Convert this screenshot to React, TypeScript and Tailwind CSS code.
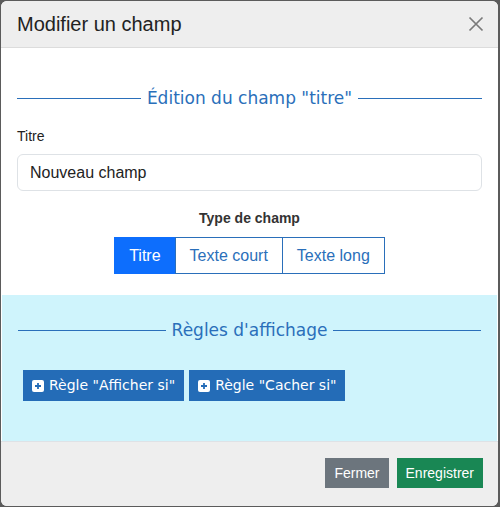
import React from "react";

// ── Small pieces ──────────────────────────────────────────────────────────────

function Legend({ label }: { label: string }) {
  return (
    <div className="flex items-center gap-[6px]">
      <div className="h-[1px] flex-1 bg-[#2a6fba]" />
      <span
        className="text-[17px] leading-6 text-[#2a6fba]"
        style={{ fontFamily: '"DejaVu Sans", Verdana, sans-serif' }}
      >
        {label}
      </span>
      <div className="h-[1px] flex-1 bg-[#2a6fba]" />
    </div>
  );
}

function PlusSquare() {
  return (
    <svg width="12" height="12" viewBox="0 0 12 12" aria-hidden="true">
      <rect x="0" y="0" width="12" height="12" rx="2" fill="#ffffff" />
      <path d="M6 3v6M3 6h6" stroke="#246cb7" strokeWidth="1.8" />
    </svg>
  );
}

const TYPES = ["Titre", "Texte court", "Texte long"];

// ── Modal ─────────────────────────────────────────────────────────────────────

export default function App() {
  return (
    <div
      className="w-[500px] h-[507px] bg-[#5b5b5b] pl-[1px] pr-[2px] pt-[1px] pb-[1px]"
      style={{ fontFamily: '"Liberation Sans", Arial, sans-serif' }}
    >
      <div className="flex h-full flex-col overflow-hidden rounded-[6px] bg-white">
        {/* Header */}
        <div className="flex h-[47px] shrink-0 items-center justify-between border-b border-[#dcdcdc] bg-[#eeeeee] pl-[16px] pr-[14px]">
          <h1 className="text-[20px] text-[#222222]">Modifier un champ</h1>
          <svg width="16" height="16" viewBox="0 0 16 16" aria-hidden="true">
            <path d="M1.5 1.5l13 13M14.5 1.5l-13 13" stroke="#7a7a7a" strokeWidth="1.7" />
          </svg>
        </div>

        {/* Field edition */}
        <div className="px-[16px] pt-[38px] pb-[21px]">
          <Legend label='Édition du champ "titre"' />

          <label className="mt-[16px] block text-[14px] leading-5 text-[#222222]">Titre</label>
          <div className="mt-[8px] flex h-[37px] items-center rounded-[6px] border border-[#dee2e6] px-[12px] text-[16px] text-[#222222]">
            Nouveau champ
          </div>

          <p className="mt-[17px] text-center text-[14px] font-bold leading-5 text-[#333333]">
            Type de champ
          </p>
          <div className="mt-[9px] flex justify-center">
            {TYPES.map((t, i) => (
              <div
                key={t}
                className={
                  i === 0
                    ? "flex h-[37px] items-center border border-[#0d6efd] bg-[#0d6efd] px-[14px] text-[16px] text-white"
                    : "-ml-[1px] flex h-[37px] items-center border border-[#2a6fba] bg-white px-[14px] text-[16px] text-[#2a6fba]"
                }
              >
                {t}
              </div>
            ))}
          </div>
        </div>

        {/* Display rules */}
        <div className="mx-[1px] bg-[#cff4fc] px-[16px] pt-[23px] pb-[40px]">
          <Legend label="Règles d'affichage" />
          <div
            className="mt-[28px] ml-[5px] flex gap-[5px]"
            style={{ fontFamily: '"DejaVu Sans", Verdana, sans-serif' }}
          >
            {['Règle "Afficher si"', 'Règle "Cacher si"'].map((r) => (
              <div
                key={r}
                className="flex h-[31px] items-center gap-[5px] bg-[#246cb7] px-[9px] text-[14px] text-white"
              >
                <PlusSquare />
                {r}
              </div>
            ))}
          </div>
        </div>

        {/* Footer */}
        <div className="flex flex-1 items-start justify-end gap-[8px] border-t border-[#dee2e6] bg-[#eeeeee] pt-[16px] pr-[15px]">
          <div className="flex h-[30px] items-center bg-[#6c757d] px-[9px] text-[14px] text-white">
            Fermer
          </div>
          <div className="flex h-[30px] items-center bg-[#198754] px-[9px] text-[14px] text-white">
            Enregistrer
          </div>
        </div>
      </div>
    </div>
  );
}
